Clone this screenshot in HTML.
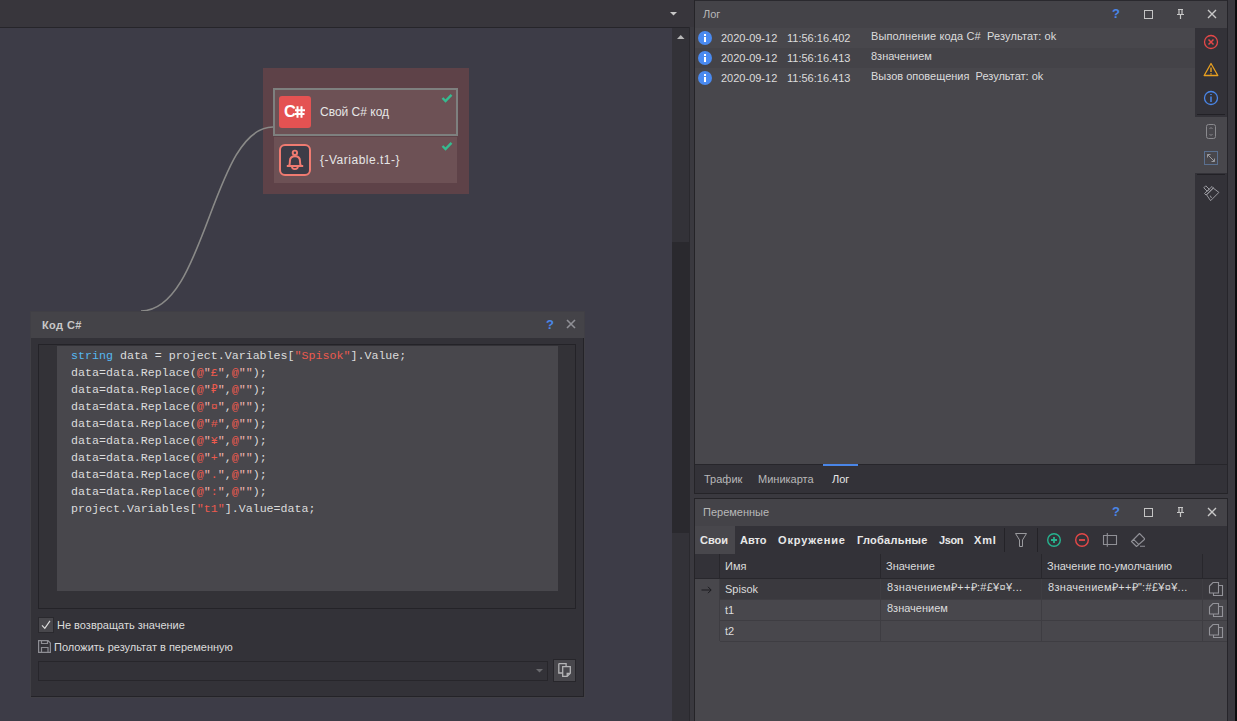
<!DOCTYPE html>
<html><head><meta charset="utf-8">
<style>
*{box-sizing:border-box;margin:0;padding:0}
html,body{width:1237px;height:721px;overflow:hidden;background:#3d3c47;font-family:"Liberation Sans",sans-serif;font-size:11px;color:#dcdcdc}
.a{position:absolute}
.t{position:absolute;white-space:pre;line-height:14px}
#topbar{left:0;top:0;width:694px;height:27px;background:#38363c}
#topline{left:0;top:27px;width:690px;height:1px;background:#26252a}
#sbtrack{left:672px;top:28px;width:17px;height:693px;background:#333238}
#sbthumb{left:672px;top:242px;width:17px;height:291px;background:#2a292e}
#sep{left:689px;top:27px;width:5px;height:694px;background:#3a393f;border-left:1px solid #2a292e}
#sepline{left:694px;top:0;width:1px;height:721px;background:#252428}
#rightedge{left:1227px;top:0;width:8px;height:721px;background:#3a393f;border-left:1px solid #26252a}
#rightblack{left:1235px;top:0;width:2px;height:721px;background:#0c0c0e}
/* log */
#log{left:695px;top:28px;width:532px;height:436px;background:#48474c}
#loghead{left:695px;top:0px;width:532px;height:28px;background:#444348;border-top:1px solid #2a292e}
.row1{left:695px;width:500px;height:20px}
.info{position:absolute;width:14px;height:14px;border-radius:50%;background:#4a8af0}
.info:before{content:"";position:absolute;left:6px;top:3px;width:2px;height:2px;background:#fff}
.info:after{content:"";position:absolute;left:6px;top:6px;width:2px;height:5px;background:#fff}
#iconcol{left:1195px;top:28px;width:32px;height:436px;background:#333238}
#tabs{left:695px;top:464px;width:532px;height:29px;background:#333238;border-top:1px solid #27262b}
#tabsline{left:694px;top:493px;width:533px;height:1px;background:#252428}
#vars{left:694px;top:498px;width:533px;height:223px;background:#48474c;border-left:1px solid #252428;border-top:1px solid #252428}
#varshead{left:695px;top:499px;width:532px;height:27px;background:#444348}
#vartool{left:695px;top:526px;width:532px;height:28px;background:#333238}
.gl{position:absolute;background:#3c3b41}
/* code panel */
#cp{left:30px;top:311px;width:555px;height:387px;background:#333238;border:1px solid #403f45;box-shadow:inset -1px -1px 0 #242328}
#cphead{left:31px;top:312px;width:553px;height:26px;background:#444348}
#ed{left:38px;top:344px;width:538px;height:265px;background:#333237;border:1px solid #242328}
#edtext{left:57px;top:346px;width:501px;height:245px;background:#48474c}
.code{position:absolute;left:71px;font-family:"Liberation Mono",monospace;font-size:11.65px;line-height:17px;white-space:pre;color:#dcdcdc}
.kw{color:#56b8f0}
.s{color:#ec5a4e}
.q{color:#f0b4ae}
</style></head><body>
<!-- left workspace -->
<div class="a" id="topbar"></div>
<div class="a" id="topline"></div>
<svg class="a" style="left:669.5px;top:11.5px" width="8" height="5"><path d="M0 0H7L3.5 3.5Z" fill="#c8c8c8"/></svg>
<div class="a" id="sbtrack"></div>
<div class="a" id="sbthumb"></div>
<svg class="a" style="left:677px;top:34px" width="9" height="6"><path d="M0 5H7.5L3.75 1Z" fill="#b8b8b8"/></svg>
<div class="a" id="sep"></div>
<div class="a" id="sepline"></div>

<!-- node group -->
<div class="a" style="left:263px;top:68px;width:206px;height:126px;background:#5e4248"></div>
<div class="a" style="left:273px;top:88px;width:185px;height:48px;background:#6d5155;border:2px solid #7e807f"></div>
<div class="a" style="left:274px;top:137px;width:183px;height:46px;background:#6d5155"></div>
<div class="a" style="left:279px;top:96px;width:32px;height:32px;background:#e45252;border-radius:3px"></div>
<div class="t" style="left:284px;top:103px;font-weight:bold;font-size:16.5px;line-height:17px;color:#fff">C</div>
<svg class="a" style="left:279px;top:96px" width="32" height="32"><path d="M18.5 10.2V21.7M22.5 10.2V21.7M16 14.2H26M16 17.9H25.5" stroke="#fff" stroke-width="2" fill="none"/></svg>
<div class="t" style="left:320px;top:104px;font-size:12px;line-height:16px;color:#e6e6e6">Свой C# код</div>
<div class="a" style="left:279px;top:144px;width:32px;height:32px;background:#3d3c47;border:2px solid #f07b71;border-radius:6px"></div>
<svg class="a" style="left:279px;top:144px" width="32" height="32">
  <path d="M7.8 22H24.2" stroke="#f07b71" stroke-width="2" fill="none"/>
  <path d="M9.8 22C10.9 21 10.9 19.5 10.9 17.5V17C10.9 13.8 13 12.2 16 12.2C19 12.2 21 13.8 21 17V17.5C21 19.5 21 21 22.2 22" stroke="#f07b71" stroke-width="2" fill="none"/>
  <path d="M12.9 22.6Q12.9 25.1 15.9 25.1Q18.9 25.1 18.9 22.6" stroke="#f07b71" stroke-width="1.8" fill="none"/>
  <circle cx="15.9" cy="8.8" r="2.2" stroke="#f07b71" stroke-width="1.9" fill="none"/>
</svg>
<div class="t" style="left:320px;top:152px;font-size:12px;line-height:16px;color:#e6e6e6;letter-spacing:0.5px">{-Variable.t1-}</div>
<svg class="a" style="left:441px;top:93.3px" width="12" height="10"><path d="M1.5 5L4.5 8L10.5 1.8" stroke="#35bb90" stroke-width="2.4" fill="none"/></svg>
<svg class="a" style="left:441px;top:141.3px" width="12" height="10"><path d="M1.5 5L4.5 8L10.5 1.8" stroke="#35bb90" stroke-width="2.4" fill="none"/></svg>

<svg class="a" style="left:0;top:0" width="672" height="721">
  <path d="M273 127 C 212 127, 206 311, 141 311" stroke="#8a8a88" stroke-width="1.6" fill="none"/>
</svg>
<!-- code panel -->
<div class="a" id="cp"></div>
<div class="a" id="cphead"></div>
<div class="t" style="left:42px;top:318px;font-weight:bold;color:#c8c8c8;letter-spacing:0.4px">Код C#</div>
<div class="t" style="left:546px;top:317px;font-size:13px;font-weight:bold;line-height:15px;color:#4a86e8">?</div>
<svg class="a" style="left:566px;top:319px" width="10" height="10"><path d="M1 1L9 9M9 1L1 9" stroke="#909096" stroke-width="1.6"/></svg>
<div class="a" id="ed"></div>
<div class="a" id="edtext"></div>
<div class="code" style="top:347px"><span class="kw">string</span> data = project.Variables[<span class="s">"Spisok"</span>].Value;
data=data.Replace(<span class="s">@</span><span class="q">"</span><span class="s">£</span><span class="q">"</span>,<span class="s">@</span><span class="q">""</span>);
data=data.Replace(<span class="s">@</span><span class="q">"</span><span class="s">₽</span><span class="q">"</span>,<span class="s">@</span><span class="q">""</span>);
data=data.Replace(<span class="s">@</span><span class="q">"</span><span class="s">¤</span><span class="q">"</span>,<span class="s">@</span><span class="q">""</span>);
data=data.Replace(<span class="s">@</span><span class="q">"</span><span class="s">#</span><span class="q">"</span>,<span class="s">@</span><span class="q">""</span>);
data=data.Replace(<span class="s">@</span><span class="q">"</span><span class="s">¥</span><span class="q">"</span>,<span class="s">@</span><span class="q">""</span>);
data=data.Replace(<span class="s">@</span><span class="q">"</span><span class="s">+</span><span class="q">"</span>,<span class="s">@</span><span class="q">""</span>);
data=data.Replace(<span class="s">@</span><span class="q">"</span><span class="s">.</span><span class="q">"</span>,<span class="s">@</span><span class="q">""</span>);
data=data.Replace(<span class="s">@</span><span class="q">"</span><span class="s">:</span><span class="q">"</span>,<span class="s">@</span><span class="q">""</span>);
project.Variables[<span class="s">"t1"</span>].Value=data;</div>
<div class="a" style="left:38px;top:617px;width:16px;height:16px;background:#48474c;border:1px solid #2a292e"></div>
<svg class="a" style="left:38px;top:617px" width="16" height="16"><path d="M4 8.4L6.8 11.3L12 3.9" stroke="#dcdcdc" stroke-width="1.2" fill="none"/></svg>
<div class="t" style="left:57px;top:618px;color:#dcdcdc">Не возвращать значение</div>
<svg class="a" style="left:38px;top:640px" width="14" height="14"><path d="M0.6 0.6H10L12.4 3V12.4H0.6Z M3.5 0.6V3.5H9.5V0.6 M3.5 12.4V7.5H10V12.4" stroke="#8e8e94" stroke-width="1.2" fill="none"/></svg>
<div class="t" style="left:54px;top:640px;color:#dcdcdc">Положить результат в переменную</div>
<div class="a" style="left:38px;top:661px;width:510px;height:20px;background:#333238;border:1px solid #27262b"></div>
<svg class="a" style="left:536px;top:669px" width="8" height="5"><path d="M0 0H7L3.5 3.5Z" fill="#6a6a6e"/></svg>
<div class="a" style="left:553px;top:659px;width:23px;height:23px;background:#48474c;border:1px solid #27262b"></div>
<svg class="a" style="left:553px;top:659px" width="23" height="23">
  <path d="M5.8 4.6H13.1V7.6 M5.8 4.6V14H9.6" stroke="#b4b4b6" stroke-width="1.3" fill="none"/>
  <path d="M9.7 7.7H17.3V14.3L14.2 17.3H9.7Z M14.2 17.3V14.3H17.3" stroke="#b4b4b6" stroke-width="1.3" fill="none"/>
</svg>

<!-- right side -->
<div class="a" id="rightedge"></div>
<div class="a" id="rightblack"></div>
<div class="a" id="loghead"></div>
<div class="a" id="log"></div>
<div class="a row1" style="top:48px;background:#444348"></div>
<div class="t" style="left:703px;top:7px;color:#b8b8b8">Лог</div>
<div class="t" style="left:1112px;top:6px;font-size:13px;font-weight:bold;line-height:15px;color:#4a86e8">?</div>
<div class="a" style="left:1144px;top:10px;width:9px;height:9px;border:1.3px solid #c4c4c4"></div>
<svg class="a" style="left:1175px;top:8px" width="11" height="12"><path d="M3 1.5H8M4 1.5V6.5M7 1.5V6.5M2 6.5H9M5.5 6.5V11" stroke="#c8c8c8" stroke-width="1.2" fill="none"/></svg>
<svg class="a" style="left:1207px;top:9px" width="10" height="10"><path d="M1 1L9 9M9 1L1 9" stroke="#c8c8c8" stroke-width="1.4"/></svg>

<div class="info" style="left:698px;top:31px"></div>
<div class="info" style="left:698px;top:51px"></div>
<div class="info" style="left:698px;top:71px"></div>
<div class="t" style="left:721px;top:31px">2020-09-12</div>
<div class="t" style="left:787px;top:31px">11:56:16.402</div>
<div class="t" style="left:871px;top:29px;letter-spacing:0.12px">Выполнение кода C#  Результат: ok</div>
<div class="t" style="left:721px;top:51px">2020-09-12</div>
<div class="t" style="left:787px;top:51px">11:56:16.413</div>
<div class="t" style="left:871px;top:49px">8значением</div>
<div class="t" style="left:721px;top:71px">2020-09-12</div>
<div class="t" style="left:787px;top:71px">11:56:16.413</div>
<div class="t" style="left:871px;top:69px">Вызов оповещения  Результат: ok</div>

<div class="a" id="iconcol"></div>
<div class="a" style="left:1195px;top:117px;width:32px;height:56px;background:#48474c"></div>
<div class="a" style="left:1197px;top:114px;width:28px;height:1px;background:#222126"></div>
<div class="a" style="left:1197px;top:174px;width:28px;height:1px;background:#222126"></div>
<svg class="a" style="left:1195px;top:28px" width="32" height="180">
  <circle cx="16" cy="14" r="6.5" stroke="#e54848" stroke-width="1.3" fill="none"/>
  <path d="M13.5 11.5L18.5 16.5M18.5 11.5L13.5 16.5" stroke="#e54848" stroke-width="1.5"/>
  <path d="M16 35.5L22.8 47.5H9.2Z" stroke="#e8a020" stroke-width="1.3" fill="none" stroke-linejoin="round"/>
  <path d="M16 39.5V44M16 45.2V46.5" stroke="#e8a020" stroke-width="1.4"/>
  <circle cx="16" cy="70" r="6.5" stroke="#4a86e8" stroke-width="1.3" fill="none"/>
  <path d="M16 68.5V74M16 66V67" stroke="#4a86e8" stroke-width="1.5"/>
  <rect x="11.5" y="96.5" width="9" height="14" rx="2" stroke="#8a8a8e" stroke-width="1" fill="none"/>
  <path d="M14.5 101L16 99.5L17.5 101M14.5 106L16 107.5L17.5 106" stroke="#8a8a8e" stroke-width="1" fill="none"/>
  <rect x="9.5" y="123.5" width="13" height="13" stroke="#5a7090" stroke-width="1" fill="none"/>
  <path d="M12.5 126.5L19.5 133.5M12.5 126.5H15.5M12.5 126.5V129.5M19.5 133.5H16.5M19.5 133.5V130.5" stroke="#9a9a9e" stroke-width="1" fill="none"/>
  <path transform="translate(1,1)" d="M7.8 158.8L9.8 156.8L13.3 160.3L11.3 162.3Z M8.5 164.5L16 157.5L17.5 159L10 166Z M10.6 165.9L17.1 159L22.9 163.4L14.6 171.7Z M14.2 166.6L15.5 169" stroke="#9a9aa0" stroke-width="1" fill="none" stroke-linejoin="round"/>
</svg>

<div class="a" id="tabs"></div>
<div class="a" id="tabsline"></div>
<div class="a" style="left:823px;top:464px;width:35px;height:2px;background:#4a86e8"></div>
<div class="t" style="left:704px;top:472px;color:#b8b8b8">Трафик</div>
<div class="t" style="left:758px;top:472px;color:#b8b8b8">Миникарта</div>
<div class="t" style="left:832px;top:472px;color:#e6e6e6">Лог</div>

<div class="a" id="vars"></div>
<div class="a" style="left:694px;top:494px;width:534px;height:4px;background:#3a393f"></div>
<div class="a" id="varshead"></div>
<div class="t" style="left:703px;top:505px;color:#b8b8b8">Переменные</div>
<div class="t" style="left:1112px;top:504px;font-size:13px;font-weight:bold;line-height:15px;color:#4a86e8">?</div>
<div class="a" style="left:1144px;top:508px;width:9px;height:9px;border:1.3px solid #c4c4c4"></div>
<svg class="a" style="left:1175px;top:506px" width="11" height="12"><path d="M3 1.5H8M4 1.5V6.5M7 1.5V6.5M2 6.5H9M5.5 6.5V11" stroke="#c8c8c8" stroke-width="1.2" fill="none"/></svg>
<svg class="a" style="left:1207px;top:507px" width="10" height="10"><path d="M1 1L9 9M9 1L1 9" stroke="#c8c8c8" stroke-width="1.4"/></svg>

<div class="a" id="vartool"></div>
<div class="a" style="left:695px;top:526px;width:40px;height:28px;background:#48474c"></div>
<div class="t" style="left:700px;top:533px;font-weight:bold;color:#e8e8e8">Свои</div>
<div class="t" style="left:740px;top:533px;font-weight:bold;color:#e8e8e8">Авто</div>
<div class="t" style="left:778px;top:533px;font-weight:bold;color:#e8e8e8;letter-spacing:0.85px">Окружение</div>
<div class="t" style="left:857px;top:533px;font-weight:bold;color:#e8e8e8;letter-spacing:0.25px">Глобальные</div>
<div class="t" style="left:939px;top:533px;font-weight:bold;color:#e8e8e8;letter-spacing:-0.4px">Json</div>
<div class="t" style="left:974px;top:533px;font-weight:bold;color:#e8e8e8;letter-spacing:0.8px">Xml</div>
<div class="a" style="left:1004px;top:528px;width:1px;height:24px;background:#242328"></div>
<div class="a" style="left:1037px;top:528px;width:1px;height:24px;background:#242328"></div>
<svg class="a" style="left:1005px;top:526px" width="140" height="28">
  <path d="M10.5 7.5H21.5L17.5 14V20.5H14.5V14Z" stroke="#9a9a9e" stroke-width="1" fill="none" stroke-linejoin="round"/>
  <circle cx="49" cy="14" r="6.3" stroke="#27b38f" stroke-width="1.4" fill="none"/>
  <path d="M46 14H52M49 11V17" stroke="#27b38f" stroke-width="1.8"/>
  <circle cx="77" cy="14" r="6.3" stroke="#e54848" stroke-width="1.4" fill="none"/>
  <path d="M74 14H80" stroke="#e54848" stroke-width="1.8"/>
  <path d="M98.5 9.5H111.5V18.5H98.5Z M102.3 7V20.8" stroke="#909096" stroke-width="1.1" fill="none"/>
  <path d="M126.5 15.5L134.5 7.5L140 13L131.5 20.5Z M128.6 13.4L133.6 18.4 M135 20.2H140" stroke="#909096" stroke-width="1.1" fill="none" stroke-linejoin="round"/>
</svg>

<!-- grid -->
<div class="a" style="left:695px;top:554px;width:532px;height:24px;background:#333238"></div>
<div class="a" style="left:695px;top:578px;width:532px;height:1px;background:#28272c"></div>
<div class="a" style="left:719px;top:554px;width:1px;height:24px;background:#28272c"></div>
<div class="a" style="left:880px;top:554px;width:1px;height:24px;background:#28272c"></div>
<div class="a" style="left:1041px;top:554px;width:1px;height:24px;background:#28272c"></div>
<div class="a" style="left:1202px;top:554px;width:1px;height:24px;background:#28272c"></div>
<div class="t" style="left:725px;top:559px">Имя</div>
<div class="t" style="left:886px;top:559px">Значение</div>
<div class="t" style="left:1047px;top:559px">Значение по-умолчанию</div>

<div class="a" style="left:720px;top:579px;width:507px;height:20px;background:#3a393e"></div>
<div class="a" style="left:720px;top:599px;width:507px;height:1px;background:#3e3d42"></div>
<div class="a" style="left:720px;top:620px;width:507px;height:1px;background:#3e3d42"></div>
<div class="a" style="left:720px;top:641px;width:507px;height:1px;background:#3e3d42"></div>
<div class="a" style="left:719px;top:579px;width:1px;height:62px;background:#3e3d42"></div>
<div class="a" style="left:880px;top:579px;width:1px;height:62px;background:#3e3d42"></div>
<div class="a" style="left:1041px;top:579px;width:1px;height:62px;background:#3e3d42"></div>
<div class="a" style="left:1202px;top:579px;width:1px;height:62px;background:#3e3d42"></div>
<svg class="a" style="left:698px;top:585px" width="16" height="10"><path d="M3.5 5H13M10 1.8L13.2 5L10 8.2" stroke="#1a1a1e" stroke-width="1" fill="none"/></svg>
<div class="t" style="left:725px;top:582px">Spisok</div>
<div class="t" style="left:887px;top:580px;letter-spacing:0.3px">8значением₽++₽:#£¥¤¥...</div>
<div class="t" style="left:1048px;top:580px;letter-spacing:0.3px">8значением₽++₽":#£¥¤¥...</div>
<div class="t" style="left:725px;top:603px">t1</div>
<div class="t" style="left:887px;top:601px">8значением</div>
<div class="t" style="left:725px;top:624px">t2</div>
<svg class="a" style="left:1207px;top:580px" width="18" height="62">
  <g stroke="#939399" stroke-width="1.1" fill="none">
  <path d="M2.5 6L6 2.5H11.5V13H2.5Z M11.5 5.5H15.5V15.5H6.5V13"/>
  <path transform="translate(0,21)" d="M2.5 6L6 2.5H11.5V13H2.5Z M11.5 5.5H15.5V15.5H6.5V13"/>
  <path transform="translate(0,42)" d="M2.5 6L6 2.5H11.5V13H2.5Z M11.5 5.5H15.5V15.5H6.5V13"/>
  </g>
</svg>
</body></html>
